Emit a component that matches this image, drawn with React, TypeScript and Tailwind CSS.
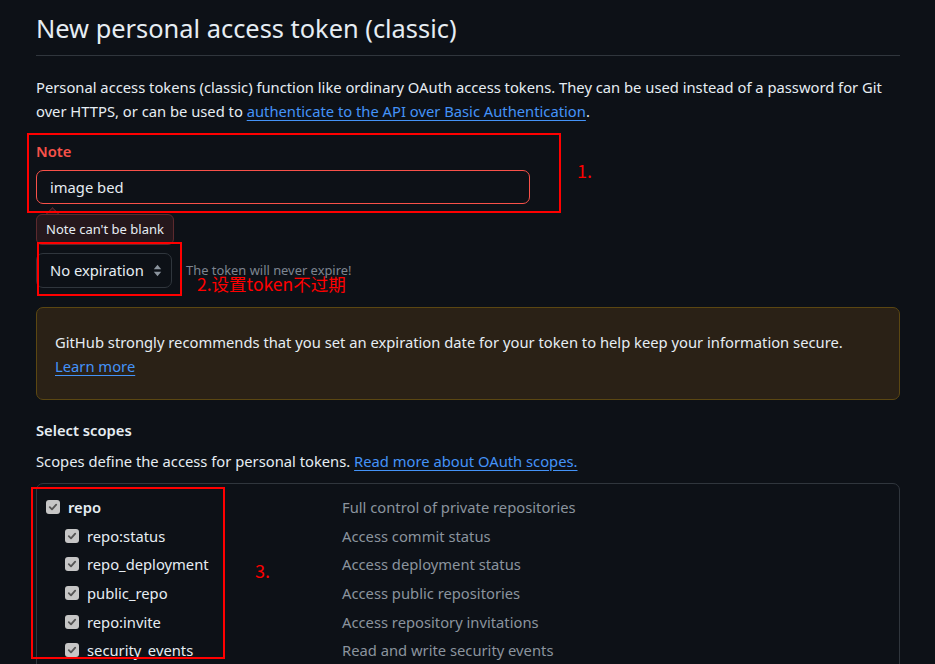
const scopes = [
  { name: "repo", desc: "Full control of private repositories", parent: true },
  { name: "repo:status", desc: "Access commit status" },
  { name: "repo_deployment", desc: "Access deployment status" },
  { name: "public_repo", desc: "Access public repositories" },
  { name: "repo:invite", desc: "Access repository invitations" },
  { name: "security_events", desc: "Read and write security events" },
];

function CheckMark() {
  return (
    <span className="flex h-[14px] w-[14px] shrink-0 items-center justify-center rounded-[3px] bg-[#c6c6c6]">
      <svg width="10" height="10" viewBox="0 0 10 10" fill="none">
        <path d="M1.8 5.2 4 7.4 8.2 2.6" stroke="#545454" strokeWidth="1.8" strokeLinecap="round" strokeLinejoin="round" />
      </svg>
    </span>
  );
}

function UpDown() {
  return (
    <svg width="9" height="13" viewBox="0 0 9 13" fill="#8b949e">
      <path d="M4.5 0.8 8.2 5.2H0.8z" />
      <path d="M4.5 12.2 0.8 7.8h7.4z" />
    </svg>
  );
}

function Mark({ className, children }: { className: string; children?: React.ReactNode }) {
  return (
    <div className={"pointer-events-none absolute " + className}>{children}</div>
  );
}

export default function App() {
  return (
    <div
      className="relative h-[664px] w-[935px] overflow-hidden bg-[#0d1117] pl-[36px] pr-[35px] text-[#e6edf3]"
      style={{ fontFamily: '"Noto Sans", "Open Sans", sans-serif' }}
    >
      <div className="border-b border-[#30363d] pt-[10px] pb-[9px]">
        <h1 className="text-[25.4px] leading-[36px] font-normal">New personal access token (classic)</h1>
      </div>

      <p className="mt-[19px] text-[14.75px] leading-[24px]">
        Personal access tokens (classic) function like ordinary OAuth access tokens. They can be used instead of a password for Git over HTTPS, or can be used to{" "}
        <a className="text-[#4493f8] underline underline-offset-[3px]">authenticate to the API over Basic Authentication</a>.
      </p>

      <div className="mt-[16px] text-[14.75px] leading-[24px] font-semibold text-[#f85149]">Note</div>
      <div className="mt-[7px] flex h-[34px] w-[494px] items-center rounded-[7px] border border-[#f85149] px-[13px] text-[14.75px]">
        image bed
      </div>

      <div className="relative mt-[10px] w-fit">
        <div className="absolute -top-[5px] left-[12px] h-[9px] w-[9px] rotate-45 border-l border-t border-[#5c2a2e] bg-[#25171c]" />
        <div className="relative flex h-[31px] items-center rounded-[6px] border border-[#5c2a2e] bg-[#25171c] px-[9px] text-[13px]">
          Note can't be blank
        </div>
      </div>

      <div className="mt-[8px] flex items-center gap-[14px]">
        <div className="flex h-[35px] w-[136px] items-center justify-between rounded-[7px] border border-[#30363d] bg-[#0d1117] pl-[13px] pr-[9px] text-[14.75px]">
          <span>No expiration</span>
          <UpDown />
        </div>
        <span className="text-[12.9px] text-[#7d8590]">The token will never expire!</span>
      </div>

      <div className="mt-[19px] h-[93px] rounded-[7px] border border-[#5b4712] bg-[#2a2116] px-[18px] pt-[22px] text-[14.75px] leading-[24px]">
        GitHub strongly recommends that you set an expiration date for your token to help keep your information secure.
        <br />
        <a className="text-[#4493f8] underline underline-offset-[3px]">Learn more</a>
      </div>

      <div className="mt-[18px] text-[14.75px] leading-[24px] font-semibold">Select scopes</div>
      <p className="mt-[7px] text-[14.75px] leading-[24px]">
        Scopes define the access for personal tokens.{" "}
        <a className="text-[#4493f8] underline underline-offset-[3px]">Read more about OAuth scopes.</a>
      </p>

      <div className="mt-[10px] h-[300px] rounded-[7px] border border-[#30363d] pt-[9px]">
        {scopes.map((s) => (
          <div key={s.name} className="flex h-[28.6px] items-center text-[14.75px]">
            <div className={"flex w-[305px] items-center " + (s.parent ? "gap-[8px] pl-[9px] font-semibold" : "gap-[8px] pl-[28px]")}>
              <CheckMark />
              <span>{s.name}</span>
            </div>
            <span className="text-[#8b949e]">{s.desc}</span>
          </div>
        ))}
      </div>

      {/* annotations */}
      <Mark className="left-[27px] top-[133px] h-[80px] w-[534px] border-2 border-[#ff0000]" />
      <Mark className="left-[577px] top-[157px] text-[18px] leading-[26px] text-[#ff0000]">
        <span style={{ fontFamily: '"Noto Sans CJK SC", sans-serif' }}>1.</span>
      </Mark>
      <Mark className="left-[37px] top-[242px] h-[54px] w-[145px] border-2 border-[#ff0000]" />
      <Mark className="left-[197px] top-[271px] text-[17.5px] leading-[26px] text-[#ff0000]">
        <span style={{ fontFamily: '"Noto Sans CJK SC", sans-serif' }}>2.设置token不过期</span>
      </Mark>
      <Mark className="left-[31px] top-[487px] h-[172px] w-[194px] border-2 border-[#ff0000]" />
      <Mark className="left-[255px] top-[557px] text-[18px] leading-[26px] text-[#ff0000]">
        <span style={{ fontFamily: '"Noto Sans CJK SC", sans-serif' }}>3.</span>
      </Mark>
    </div>
  );
}
